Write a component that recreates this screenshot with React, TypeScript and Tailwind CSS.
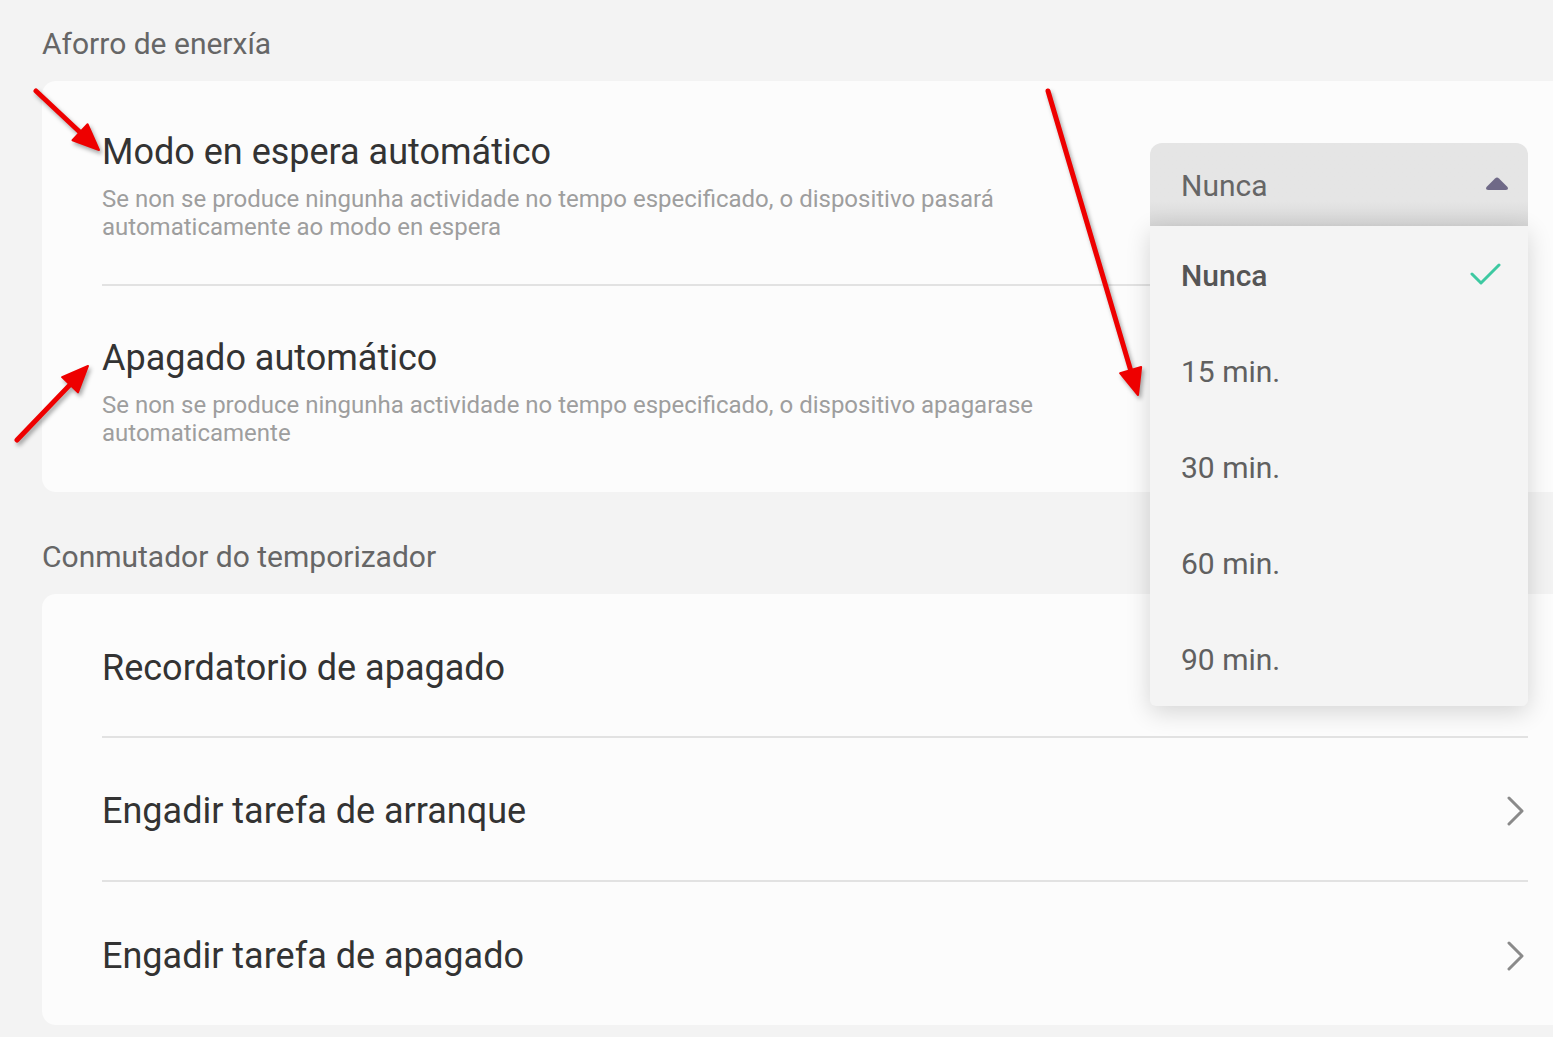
import React from "react";

const font = { fontFamily: "Roboto, 'Noto Sans', Arial, sans-serif" };

type Pt = [number, number];

function Arrow({ from, to }: { from: Pt; to: Pt }) {
  const dx = to[0] - from[0];
  const dy = to[1] - from[1];
  const len = Math.hypot(dx, dy);
  const ux = dx / len;
  const uy = dy / len;
  const headLen = 26;
  const headW = 11;
  const bx = to[0] - ux * headLen;
  const by = to[1] - uy * headLen;
  const left: Pt = [bx - uy * headW, by + ux * headW];
  const right: Pt = [bx + uy * headW, by - ux * headW];
  return (
    <g>
      <line x1={from[0]} y1={from[1]} x2={bx + ux * 4} y2={by + uy * 4} stroke="#ee0000" strokeWidth={5} strokeLinecap="round" />
      <polygon points={`${to[0]},${to[1]} ${left[0]},${left[1]} ${right[0]},${right[1]}`} fill="#ee0000" stroke="#ee0000" strokeWidth={2} strokeLinejoin="round" />
    </g>
  );
}

function Chevron() {
  return (
    <svg width="20" height="30" viewBox="0 0 20 30" className="shrink-0">
      <polyline points="3,2 16,15 3,28" fill="none" stroke="#8a8a8a" strokeWidth="3" strokeLinecap="round" strokeLinejoin="round" />
    </svg>
  );
}

const options = ["Nunca", "15 min.", "30 min.", "60 min.", "90 min."];

function Dropdown() {
  return (
    <div className="relative mt-[3px] w-[378px] shrink-0">
      <div className="flex h-[83px] items-center justify-between rounded-t-[12px] bg-gradient-to-b from-[#e5e5e5] from-70% to-[#d6d6d6] pl-[31px] pr-[18px]">
        <span className="pt-[3px] text-[30px] text-[#666666]">Nunca</span>
        <svg width="26" height="16" viewBox="0 0 26 16">
          <path d="M11 2.5 Q13 0.5 15 2.5 L23.5 11 Q25 14 21.5 14 L4.5 14 Q1 14 2.5 11 Z" fill="#6f6987" />
        </svg>
      </div>
      <div className="absolute left-0 top-[83px] z-10 w-full rounded-b-[6px] bg-[#f4f4f4] shadow-[0_6px_24px_rgba(0,0,0,0.16)]">
        {options.map((o, i) => (
          <div key={o} className="flex h-[96px] items-center justify-between pl-[31px] pr-[26px] pt-[3px]">
            <span className={i === 0 ? "text-[30px] font-medium text-[#555555]" : "text-[30px] text-[#606060]"}>{o}</span>
            {i === 0 && (
              <svg width="32" height="26" viewBox="0 0 32 26">
                <polyline points="2,12 11,21 29,3" fill="none" stroke="#3dc9a1" strokeWidth="3" strokeLinecap="round" strokeLinejoin="round" />
              </svg>
            )}
          </div>
        ))}
      </div>
    </div>
  );
}

export default function App() {
  return (
    <div className="relative min-h-[1037px] w-full overflow-hidden bg-[#f3f3f3]" style={font}>
      <div className="h-[81px] pl-[42px] pt-[26px]">
        <h2 className="text-[30px] leading-[36px] text-[#666666]">Aforro de enerxía</h2>
      </div>

      <div className="ml-[42px] rounded-l-[14px] bg-[#fcfcfc] pr-[25px]">
        <div className="flex h-[203px] items-center pl-[60px]">
          <div className="min-w-0 flex-1 pr-[55px] pt-[8px]">
            <div className="text-[36px] leading-[40px] text-[#333333]">Modo en espera automático</div>
            <p className="mt-[13px] text-[24px] leading-[28px] text-[#9e9e9e]">
              Se non se produce ningunha actividade no tempo especificado, o dispositivo pasará automaticamente ao modo en espera
            </p>
          </div>
          <Dropdown />
        </div>
        <div className="ml-[60px] h-[2px] bg-[#e2e2e2]" />
        <div className="flex h-[206px] items-center pl-[60px]">
          <div className="min-w-0 flex-1 pr-[433px] pt-[7px]">
            <div className="text-[36px] leading-[40px] text-[#333333]">Apagado automático</div>
            <p className="mt-[13px] text-[24px] leading-[28px] text-[#9e9e9e]">
              Se non se produce ningunha actividade no tempo especificado, o dispositivo apagarase automaticamente
            </p>
          </div>
        </div>
      </div>

      <div className="h-[102px] pl-[42px] pt-[47px]">
        <h2 className="text-[30px] leading-[36px] text-[#666666]">Conmutador do temporizador</h2>
      </div>

      <div className="ml-[42px] rounded-l-[14px] bg-[#fcfcfc] pr-[25px]">
        <div className="flex h-[142px] items-center pl-[60px] pt-[5px]">
          <span className="text-[36px] leading-[40px] text-[#333333]">Recordatorio de apagado</span>
        </div>
        <div className="ml-[60px] h-[2px] bg-[#e2e2e2]" />
        <div className="flex h-[142px] items-center justify-between pl-[60px] pr-[2px] pt-[4px]">
          <span className="text-[36px] leading-[40px] text-[#333333]">Engadir tarefa de arranque</span>
          <Chevron />
        </div>
        <div className="ml-[60px] h-[2px] bg-[#e2e2e2]" />
        <div className="flex h-[143px] items-center justify-between pl-[60px] pr-[2px] pt-[4px]">
          <span className="text-[36px] leading-[40px] text-[#333333]">Engadir tarefa de apagado</span>
          <Chevron />
        </div>
      </div>

      <svg
        className="pointer-events-none absolute left-0 top-0 z-20"
        width="1553"
        height="1037"
        style={{ filter: "drop-shadow(2px 3px 2px rgba(0,0,0,0.35))" }}
      >
        <Arrow from={[36, 91]} to={[99, 150]} />
        <Arrow from={[17, 440]} to={[88, 366]} />
        <Arrow from={[1048, 91]} to={[1138, 395]} />
      </svg>
    </div>
  );
}
